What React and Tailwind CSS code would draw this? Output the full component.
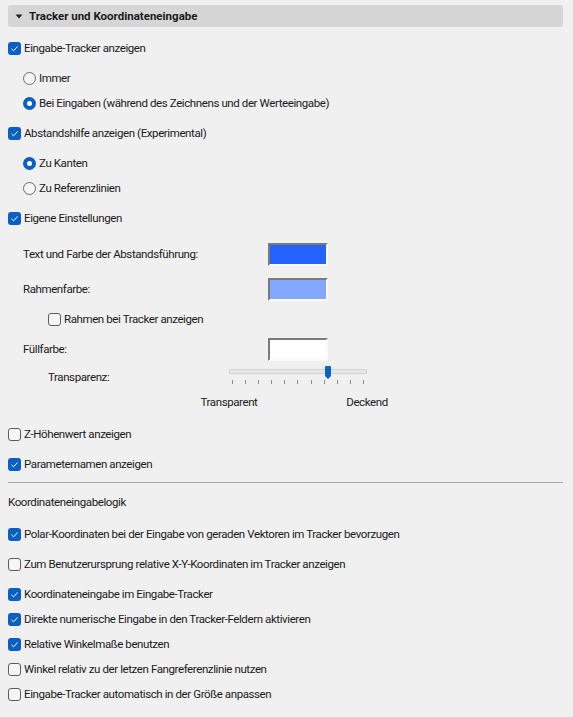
import React from 'react';

const Check = ({ checked }) =>
  checked ? (
    <span className="flex h-[13px] w-[13px] shrink-0 items-center justify-center rounded-[3px] bg-[#0a5fc2]">
      <svg width="9" height="9" viewBox="0 0 9 9">
        <path d="M1.5 4.8 L3.6 6.8 L7.6 2.4" fill="none" stroke="#ffffff" strokeWidth="1" />
      </svg>
    </span>
  ) : (
    <span className="h-[13px] w-[13px] shrink-0 rounded-[3px] border border-[#5c5c5c] bg-[#f6f6f6]" />
  );

const Radio = ({ checked }) =>
  checked ? (
    <span className="flex h-[13px] w-[13px] shrink-0 items-center justify-center rounded-full bg-[#0a5fc2]">
      <span className="h-[5px] w-[5px] rounded-full bg-white" />
    </span>
  ) : (
    <span className="h-[13px] w-[13px] shrink-0 rounded-full border border-[#6a6a6a] bg-[#f6f6f6]" />
  );

const CheckRow = ({ checked, label, indent = '', mt }) => (
  <div className={`flex h-[20px] items-center gap-[3px] ${indent} ${mt}`}>
    <Check checked={checked} />
    <span>{label}</span>
  </div>
);

const RadioRow = ({ checked, label, mt }) => (
  <div className={`flex h-[20px] items-center gap-[3px] pl-[15px] ${mt}`}>
    <Radio checked={checked} />
    <span>{label}</span>
  </div>
);

const Swatch = ({ color }) => (
  <div
    className={`h-[23px] w-[60px] border-2 border-t-[#7a7a7a] border-l-[#7a7a7a] border-r-[#fafafa] border-b-[#fafafa] ${color}`}
  />
);

const SwatchRow = ({ label, color, mt }) => (
  <div className={`flex h-[20px] items-center pl-[15px] ${mt}`}>
    <span className="w-[245px]">{label}</span>
    <Swatch color={color} />
  </div>
);

export default function App() {
  const ticks = [0, 1, 2, 3, 4, 5, 6, 7, 8, 9, 10];
  return (
    <div
      className="min-h-[717px] bg-[#f0f0f0] pl-[8px] pr-[10px] pt-[5px] text-[11.5px] leading-[16px] tracking-[-0.4px] text-[#1a1a1a]"
      style={{ fontFamily: 'Roboto, "Noto Sans", sans-serif' }}
    >
      <div className="flex h-[22px] items-center rounded-[3px] bg-[#d6d6d6] pl-[7px]">
        <svg width="8" height="5" viewBox="0 0 8 5" className="mr-[6px]">
          <path d="M0.5 0.5 H7.5 L4 4.5 Z" fill="#222222" />
        </svg>
        <span className="font-bold tracking-normal">Tracker und Koordinateneingabe</span>
      </div>

      <CheckRow checked label="Eingabe-Tracker anzeigen" mt="mt-[11px]" />
      <RadioRow label="Immer" mt="mt-[10px]" />
      <RadioRow checked label="Bei Eingaben (während des Zeichnens und der Werteeingabe)" mt="mt-[5px]" />
      <CheckRow checked label="Abstandshilfe anzeigen (Experimental)" mt="mt-[10px]" />
      <RadioRow checked label="Zu Kanten" mt="mt-[10px]" />
      <RadioRow label="Zu Referenzlinien" mt="mt-[5px]" />
      <CheckRow checked label="Eigene Einstellungen" mt="mt-[10px]" />

      <SwatchRow label="Text und Farbe der Abstandsführung:" color="bg-[#2563ff]" mt="mt-[16px]" />
      <SwatchRow label="Rahmenfarbe:" color="bg-[#82a8ff]" mt="mt-[15px]" />
      <CheckRow label="Rahmen bei Tracker anzeigen" indent="pl-[40px]" mt="mt-[10px]" />
      <SwatchRow label="Füllfarbe:" color="bg-white" mt="mt-[10px]" />

      <div className="mt-[6px] flex h-[20px] items-start pl-[40px]">
        <span className="mt-[4px] w-[181px]">Transparenz:</span>
        <div className="relative w-[138px]">
          <div className="mt-[4px] h-[5px] rounded-[1px] border border-[#d2d2d2] bg-[#e6e6e6]" />
          <div className="mt-[6px] flex justify-between px-[3px]">
            {ticks.map((t) => (
              <span key={t} className="h-[4px] w-px bg-[#8c8c8c]" />
            ))}
          </div>
          <svg width="6" height="13" viewBox="0 0 6 13" className="absolute left-[96px] top-[1px]">
            <path d="M0 1 Q0 0 1 0 H5 Q6 0 6 1 V10 L3 13 L0 10 Z" fill="#0a64c4" />
          </svg>
        </div>
      </div>

      <div className="mt-[7px] flex h-[20px] items-center pl-[221px]">
        <div className="flex w-[138px] justify-between">
          <div className="flex w-0 justify-center">
            <span className="whitespace-nowrap">Transparent</span>
          </div>
          <div className="flex w-0 justify-center">
            <span className="whitespace-nowrap">Deckend</span>
          </div>
        </div>
      </div>

      <CheckRow label="Z-Höhenwert anzeigen" mt="mt-[12px]" />
      <CheckRow checked label="Parameternamen anzeigen" mt="mt-[10px]" />

      <div className="mt-[8px] h-px bg-[#a8a8a8]" />

      <div className="mt-[9px] flex h-[20px] items-center">Koordinateneingabelogik</div>

      <CheckRow checked label="Polar-Koordinaten bei der Eingabe von geraden Vektoren im Tracker bevorzugen" mt="mt-[12px]" />
      <CheckRow label="Zum Benutzerursprung relative X-Y-Koordinaten im Tracker anzeigen" mt="mt-[10px]" />
      <CheckRow checked label="Koordinateneingabe im Eingabe-Tracker" mt="mt-[10px]" />
      <CheckRow checked label="Direkte numerische Eingabe in den Tracker-Feldern aktivieren" mt="mt-[5px]" />
      <CheckRow checked label="Relative Winkelmaße benutzen" mt="mt-[5px]" />
      <CheckRow label="Winkel relativ zu der letzen Fangreferenzlinie nutzen" mt="mt-[5px]" />
      <CheckRow label="Eingabe-Tracker automatisch in der Größe anpassen" mt="mt-[5px]" />
    </div>
  );
}
